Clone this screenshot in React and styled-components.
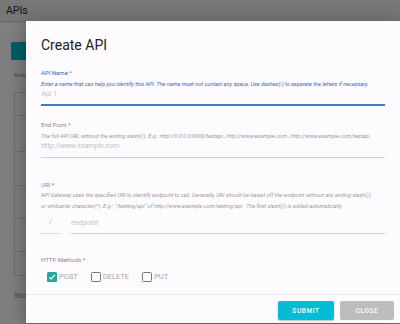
import React from 'react';
import styled, { createGlobalStyle } from 'styled-components';

const Global = createGlobalStyle`
  html, body { margin: 0; padding: 0; }
  body { font-family: Roboto, "Liberation Sans", sans-serif; background: #fff; }
  * { box-sizing: border-box; }
`;

const Page = styled.div`
  position: relative;
  width: 400px;
  height: 324px;
  overflow: hidden;
  background: #fff;
`;

const AppBar = styled.header`
  height: 21px;
  background: #efefef;
  display: flex;
  align-items: center;
  padding-left: 6px;
  box-shadow: 0 1px 2px rgba(0, 0, 0, 0.25);
`;

const AppTitle = styled.h1`
  margin: 0;
  font-size: 10.5px;
  font-weight: 400;
  line-height: 12px;
  color: #222;
`;

const Content = styled.main`
  padding: 21px 6px 0 11px;
  display: flex;
  flex-direction: column;
`;

const AddButton = styled.div`
  width: 60px;
  height: 18px;
  background: #00bcd4;
  border-radius: 2px;
`;

const SmallText = styled.div`
  margin: ${(p) => p.$mt}px 0 0 3px;
  font-size: ${(p) => p.$size}px;
  line-height: 8px;
  color: #888;
  white-space: nowrap;
`;

const Table = styled.div`
  margin: 13px 0 0 3px;
  border: 1px solid #d9d9d9;
  display: flex;
  flex-direction: column;
`;

const TableRow = styled.div`
  height: ${(p) => p.$h}px;
  border-bottom: 1px solid #d9d9d9;
  &:last-child { border-bottom: none; }
`;

const Overlay = styled.div`
  position: absolute;
  inset: 0;
  background: rgba(0, 0, 0, 0.5);
`;

const Dialog = styled.section`
  position: absolute;
  left: 26px;
  top: 21px;
  width: 374px;
  height: 302px;
  background: #fdfbfe;
  box-shadow: 0 4px 18px rgba(0, 0, 0, 0.35);
  display: flex;
  flex-direction: column;
`;

const DialogBody = styled.div`
  padding: 16px 15px 0 15px;
  display: flex;
  flex-direction: column;
`;

const Title = styled.h2`
  margin: 0;
  font-size: 14px;
  line-height: 16px;
  font-weight: 400;
  color: #222;
`;

const Field = styled.div`
  margin-top: ${(p) => p.$mt}px;
  display: flex;
  flex-direction: column;
`;

const Label = styled.label`
  font-size: 6px;
  line-height: 8px;
  height: 8px;
  color: ${(p) => (p.$focused ? '#3f65ad' : '#8a8a8a')};
  white-space: nowrap;
`;

const Req = styled.span`
  color: #e53935;
`;

const Help = styled.div`
  margin-top: 1.75px;
  font-size: 5.55px;
  line-height: 10.5px;
  font-style: italic;
  color: ${(p) => (p.$focused ? '#3f65ad' : '#9a9a9a')};
  white-space: nowrap;
`;

const InputRow = styled.div`
  margin-top: ${(p) => p.$mt || 0}px;
  display: flex;
  gap: 11px;
`;

const TextInput = styled.input`
  flex: 1;
  min-width: 0;
  height: ${(p) => (p.$focused ? 17 : 16)}px;
  padding: 0 0 6px 0;
  margin: 0;
  border: none;
  border-bottom: ${(p) => (p.$focused ? '2px solid #4a78bf' : '1px solid #cfcfcf')};
  background: transparent;
  font-family: Roboto, "Liberation Sans", sans-serif;
  font-size: 7px;
  line-height: 9px;
  color: #444;
  outline: none;
  &::placeholder { color: #c2c2c2; }
`;

const SlashBox = styled.div`
  width: 19px;
  height: 16px;
  padding-bottom: 6px;
  border-bottom: 1px dotted #c4c4c4;
  font-size: 7px;
  line-height: 9px;
  color: #b0b0b0;
  text-align: center;
`;

const CheckRow = styled.div`
  margin-top: 8px;
  padding-left: 6px;
  display: flex;
  align-items: center;
  gap: 13px;
  height: 10px;
`;

const CheckItem = styled.label`
  display: flex;
  align-items: center;
  gap: 2px;
  font-size: 7.5px;
  line-height: 10px;
  color: #a5a5a5;
`;

const Box = styled.span`
  width: 10px;
  height: 10px;
  border-radius: 1.5px;
  border: ${(p) => (p.$checked ? 'none' : '1.3px solid #777')};
  background: ${(p) => (p.$checked ? '#26a69a' : 'transparent')};
  display: flex;
  align-items: center;
  justify-content: center;
`;

const Footer = styled.footer`
  margin-top: auto;
  border-top: 1px solid #ebe9ed;
  padding: 6px 6px 3px 0;
  display: flex;
  justify-content: flex-end;
  gap: 6px;
`;

const Button = styled.button`
  width: ${(p) => p.$w}px;
  height: 19px;
  border: none;
  border-radius: 2px;
  padding: 0;
  background: ${(p) => p.$bg};
  color: #fff;
  font-family: Roboto, "Liberation Sans", sans-serif;
  font-size: 6.5px;
  letter-spacing: 0.6px;
  font-weight: 500;
  box-shadow: ${(p) => (p.$raised ? '0 1px 2px rgba(0,0,0,0.25)' : 'none')};
`;

function Check({ checked, label }) {
  return (
    <CheckItem>
      <Box $checked={checked}>
        {checked && (
          <svg width="8" height="8" viewBox="0 0 8 8">
            <path d="M1.2 4.2 L3.1 6 L6.9 1.8" fill="none" stroke="#fff" strokeWidth="1.2" />
          </svg>
        )}
      </Box>
      {label}
    </CheckItem>
  );
}

export default function App() {
  return (
    <>
      <Global />
      <Page>
        <AppBar>
          <AppTitle>APIs</AppTitle>
        </AppBar>
        <Content>
          <AddButton />
          <SmallText $mt={11} $size={6}>Rows</SmallText>
          <Table>
            <TableRow $h={23} />
            <TableRow $h={36} />
            <TableRow $h={34} />
            <TableRow $h={33} />
            <TableRow $h={33} />
            <TableRow $h={23} />
          </Table>
          <SmallText $mt={16} $size={6.5}>Show</SmallText>
        </Content>
        <Overlay />
        <Dialog>
          <DialogBody>
            <Title>Create API</Title>
            <Field $mt={16}>
              <Label $focused>API Name <Req>*</Req></Label>
              <Help $focused>
                Enter a name that can help you identify this API. The name must not contain any space. Use dashes(-) to separate the letters if necessary.
              </Help>
              <InputRow>
                <TextInput $focused placeholder="Api 1" />
              </InputRow>
            </Field>
            <Field $mt={15}>
              <Label>End Point <Req>*</Req></Label>
              <Help>
                The full API URL without the ending slash(/). E.g.: http://0.0.0.0:9000/testapi , http://www.example.com , http://www.example.com/testapi
              </Help>
              <InputRow>
                <TextInput placeholder="http://www.example.com" />
              </InputRow>
            </Field>
            <Field $mt={23}>
              <Label>URI <Req>*</Req></Label>
              <Help>
                API Gateway uses the specified URI to identify endpoint to call. Generally, URI should be based off the endpoint without any ending slash(/)
                <br />
                or wildcards character(*). E.g.: "/testing/api" of http://www.example.com/testing/api . The first slash(/) is added automatically.
              </Help>
              <InputRow $mt={7}>
                <SlashBox>/</SlashBox>
                <TextInput placeholder="endpoint" />
              </InputRow>
            </Field>
            <Field $mt={22}>
              <Label>HTTP Methods <Req>*</Req></Label>
              <CheckRow>
                <Check checked label="POST" />
                <Check label="DELETE" />
                <Check label="PUT" />
              </CheckRow>
            </Field>
          </DialogBody>
          <Footer>
            <Button $w={56} $bg="#00bcd4" $raised>SUBMIT</Button>
            <Button $w={54} $bg="#bdbdbd">CLOSE</Button>
          </Footer>
        </Dialog>
      </Page>
    </>
  );
}
